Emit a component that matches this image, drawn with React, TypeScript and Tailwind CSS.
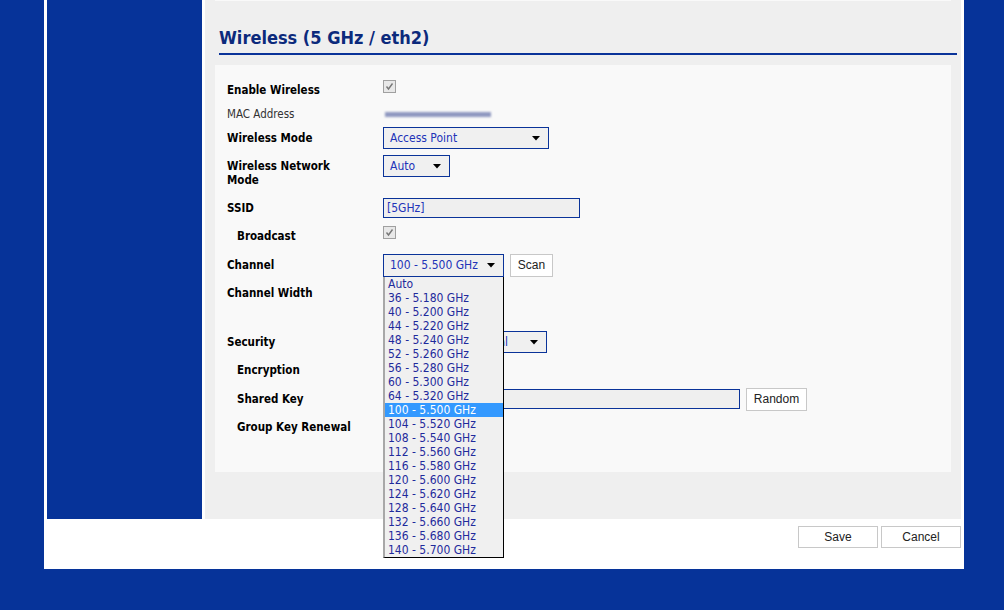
const channels = [
  "Auto",
  "36 - 5.180 GHz",
  "40 - 5.200 GHz",
  "44 - 5.220 GHz",
  "48 - 5.240 GHz",
  "52 - 5.260 GHz",
  "56 - 5.280 GHz",
  "60 - 5.300 GHz",
  "64 - 5.320 GHz",
  "100 - 5.500 GHz",
  "104 - 5.520 GHz",
  "108 - 5.540 GHz",
  "112 - 5.560 GHz",
  "116 - 5.580 GHz",
  "120 - 5.600 GHz",
  "124 - 5.620 GHz",
  "128 - 5.640 GHz",
  "132 - 5.660 GHz",
  "136 - 5.680 GHz",
  "140 - 5.700 GHz",
];

function Arrow() {
  return (
    <svg width="8" height="5" viewBox="0 0 8 5" className="shrink-0">
      <path d="M0 0 H8 L4 4.5 Z" fill="#000" />
    </svg>
  );
}

function Select({ value, w, h = 22 }: { value: string; w: number; h?: number }) {
  return (
    <div
      className="flex items-center justify-between border border-[#0a3399] bg-[#f0f0f0] pl-[6px] pr-[8px] text-[12px] text-[#2233b8] overflow-hidden whitespace-nowrap"
      style={{ width: w, height: h }}
    >
      <span>{value}</span>
      <Arrow />
    </div>
  );
}

function Check() {
  return (
    <div className="w-[13px] h-[13px] border border-[#a0a0a0] bg-[#e8e8e8] flex items-center justify-center">
      <svg width="9" height="9" viewBox="0 0 9 9">
        <path d="M1.5 4.5 L3.5 7 L7.5 1.5" fill="none" stroke="#777" strokeWidth="1.4" />
      </svg>
    </div>
  );
}

function Btn({ label, w, h }: { label: string; w: number; h: number }) {
  return (
    <div
      className="flex items-center justify-center border border-[#c8c8c8] bg-white text-[12px] text-[#222] font-['Liberation_Sans',sans-serif]"
      style={{ width: w, height: h }}
    >
      {label}
    </div>
  );
}

function Row({ label, h, sub, light, children }: { label: React.ReactNode; h: number; sub?: boolean; light?: boolean; children?: React.ReactNode }) {
  return (
    <div className="flex items-center" style={{ height: h }}>
      <div className={`w-[156px] text-[11.5px] leading-[14px] ${light ? "text-[#333] font-normal" : "text-black font-bold"} ${sub ? "pl-[10px]" : ""}`}>
        {label}
      </div>
      <div className="flex items-center gap-[6px]">{children}</div>
    </div>
  );
}

export default function App() {
  return (
    <div className="w-full h-[610px] bg-[#063399] pl-[44px] font-['DejaVu_Sans_Condensed','DejaVu_Sans',sans-serif]">
      <div className="w-[920px] h-[569px] bg-white">
        <div className="flex pl-[3px] gap-[3px]">
          <div className="w-[155px] h-[519px] bg-[#063399]" />
          <div className="w-[756px] h-[519px] bg-[#efefef] px-[10px]">
            <div className="h-[1px] bg-[#f9f9f9]" />
            <div className="ml-[4px] w-[738px] h-[54px] border-b-2 border-[#0a3399] flex items-end pb-[4px]">
              <h1 className="text-[18px] leading-[22px] font-bold text-[#0c2a7c]">Wireless (5 GHz / eth2)</h1>
            </div>
            <div className="mt-[10px] h-[407px] bg-[#f9f9f9] pl-[12px] pt-[13px]">
              <Row label="Enable Wireless" h={24}>
                <div className="-mt-[7px]"><Check /></div>
              </Row>
              <Row label="MAC Address" h={24} light>
                <div className="w-[106px] h-[5px] ml-[2px] bg-[#8f98c0] blur-[1px]" />
              </Row>
              <Row label="Wireless Mode" h={24}>
                <Select value="Access Point" w={166} />
              </Row>
              <div className="flex items-start h-[46px]">
                <div className="w-[156px] pt-[9px] text-[11.5px] leading-[14px] font-bold text-black">
                  Wireless Network
                  <br />
                  Mode
                </div>
                <div className="pt-[5px]">
                  <Select value="Auto" w={67} />
                </div>
              </div>
              <Row label="SSID" h={24}>
                <div className="w-[197px] h-[20px] border border-[#0a3399] bg-[#efefef] pl-[3px] text-[12px] leading-[18px] text-[#2233b8]">
                  [5GHz]
                </div>
              </Row>
              <Row label="Broadcast" h={32} sub>
                <div className="-mt-[7px]"><Check /></div>
              </Row>
              <Row label="Channel" h={26}>
                <div className="relative">
                  <Select value="100 - 5.500 GHz" w={121} h={23} />
                  <div className="absolute left-0 top-full z-10 w-[121px] bg-[#f0f0f0] border-l-2 border-l-[#a8a8a8] border-r border-r-black border-b border-b-black">
                    {channels.map((c) => (
                      <div
                        key={c}
                        className={`h-[14px] leading-[14px] pl-[3px] text-[12px] whitespace-nowrap ${c === "100 - 5.500 GHz" ? "bg-[#3399ff] text-white" : "text-[#1f2a9c]"}`}
                      >
                        {c}
                      </div>
                    ))}
                  </div>
                </div>
                <Btn label="Scan" w={43} h={23} />
              </Row>
              <Row label="Channel Width" h={30}>
                <Select value="20 MHz" w={90} />
              </Row>
              <div className="h-[22px]" />
              <Row label="Security" h={24}>
                <div className="w-[164px] h-[22px] flex items-center justify-end border border-[#0a3399] bg-[#f0f0f0] pr-[8px] text-[12px] text-[#2233b8] overflow-hidden whitespace-nowrap">
                  <span className="mr-[22px]">WPA2 Personal</span>
                  <Arrow />
                </div>
              </Row>
              <Row label="Encryption" h={32} sub>
                <Select value="AES" w={90} />
              </Row>
              <Row label="Shared Key" h={26} sub>
                <div className="w-[357px] h-[20px] border border-[#0a3399] bg-[#efefef]" />
                <Btn label="Random" w={61} h={23} />
              </Row>
              <Row label="Group Key Renewal" h={30} sub />
            </div>
          </div>
        </div>
        <div className="flex justify-end gap-[3px] pt-[7px] pr-[3px]">
          <Btn label="Save" w={80} h={22} />
          <Btn label="Cancel" w={80} h={22} />
        </div>
      </div>
    </div>
  );
}
